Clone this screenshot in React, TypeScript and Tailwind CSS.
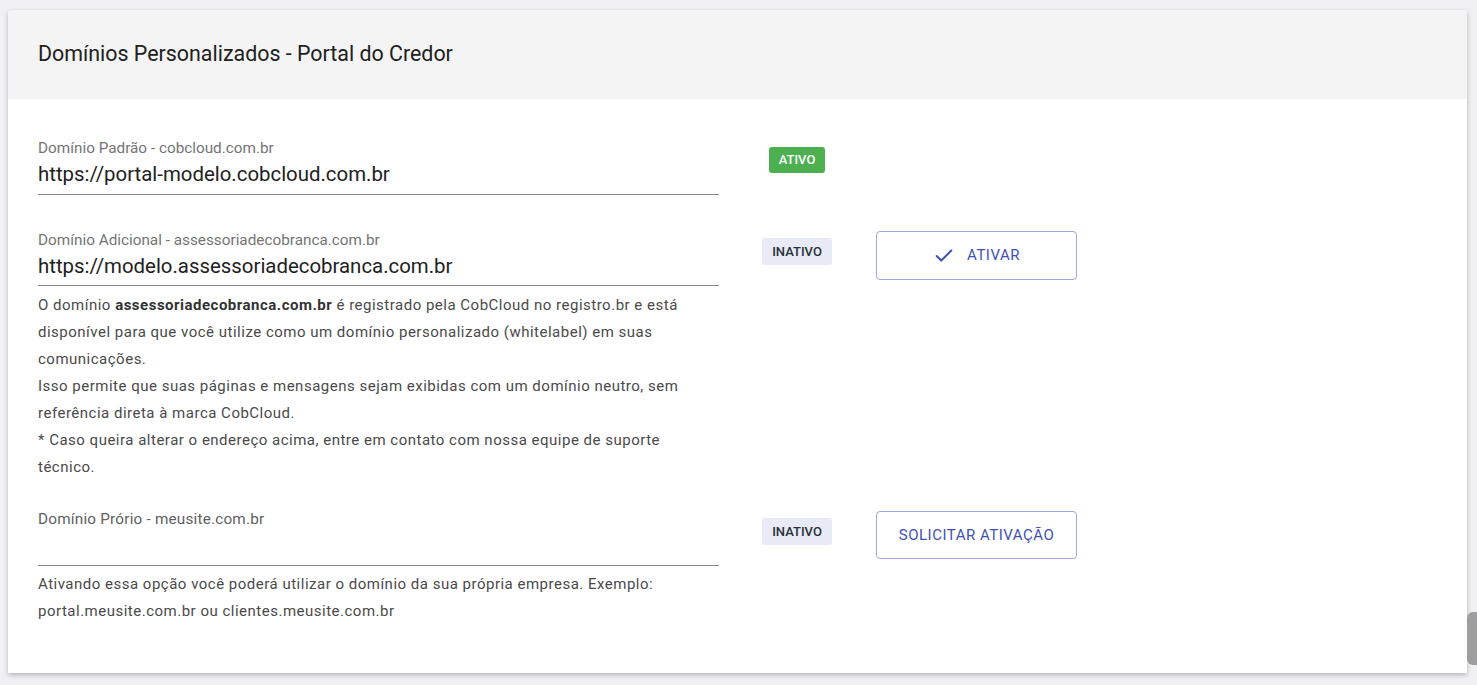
import { Check } from 'lucide-react';

function StatusBadge({ active }: { active: boolean }) {
  return active ? (
    <span className="inline-flex h-[26px] w-[56px] items-center justify-center rounded-[3px] bg-[#4caf50] text-[13px] font-medium text-white">
      ATIVO
    </span>
  ) : (
    <span className="inline-flex h-[27px] w-[70px] items-center justify-center rounded-[3px] bg-[#e8eaf6] text-[13px] font-medium text-[#263238]">
      INATIVO
    </span>
  );
}

export default function App() {
  return (
    <div className="min-h-screen bg-[#f1f1f3] pt-[10px] pl-2 pr-[10px] font-['Roboto',sans-serif]">
      <div className="w-[1459px] overflow-hidden rounded-t-[4px] bg-white shadow-[0_2px_5px_rgba(0,0,0,0.25)]">
        {/* Header */}
        <div className="flex h-[89px] items-center bg-[#f4f4f4] px-[30px] pb-[1px]">
          <h1 className="text-[21.4px] text-[#212121]">Domínios Personalizados - Portal do Credor</h1>
        </div>

        {/* Content */}
        <div className="px-[30px] pt-[40px] pb-[48px]">
          {/* Domínio padrão */}
          <div className="flex">
            <div className="w-[681px]">
              <div className="text-[15.3px] leading-[18px] text-[#757575]">Domínio Padrão - cobcloud.com.br</div>
              <div className="border-b border-[#8a8a8a] pt-[4px] pb-[7px] text-[20.4px] leading-[26px] text-[#212121]">
                https://portal-modelo.cobcloud.com.br
              </div>
            </div>
            <div className="w-[157px] pt-[8px] pl-[50px]">
              <StatusBadge active />
            </div>
          </div>

          {/* Domínio adicional */}
          <div className="mt-[36px] flex">
            <div className="w-[681px]">
              <div className="text-[15.3px] leading-[18px] text-[#757575]">
                Domínio Adicional - assessoriadecobranca.com.br
              </div>
              <div className="border-b border-[#8a8a8a] pt-[4px] pb-[6px] text-[20.4px] leading-[26px] text-[#212121]">
                https://modelo.assessoriadecobranca.com.br
              </div>
              <p className="max-w-[665px] pt-[6px] text-[15px] leading-[27px] tracking-[0.5px] text-[#4a4a4a]">
                O domínio <b className="font-bold text-[#333]">assessoriadecobranca.com.br</b> é registrado pela
                CobCloud no registro.br e está disponível para que você utilize como um domínio personalizado
                (whitelabel) em suas comunicações.
                <br />
                Isso permite que suas páginas e mensagens sejam exibidas com um domínio neutro, sem referência direta à
                marca CobCloud.
                <br />* Caso queira alterar o endereço acima, entre em contato com nossa equipe de suporte técnico.
              </p>
            </div>
            <div className="w-[157px] pt-[7px] pl-[43px]">
              <StatusBadge active={false} />
            </div>
            <div>
              <button className="flex h-[49px] w-[201px] items-center justify-center gap-[12px] rounded-[4px] border border-[#9fa8da] bg-white text-[15px] tracking-[0.5px] text-[#3f51b5]">
                <Check className="h-[22px] w-[22px]" strokeWidth={2.2} />
                ATIVAR
              </button>
            </div>
          </div>

          {/* Domínio próprio */}
          <div className="mt-[29px] flex">
            <div className="w-[681px]">
              <div className="text-[15.3px] leading-[18px] tracking-[0.2px] text-[#5f5f5f]">Domínio Prório - meusite.com.br</div>
              <div className="h-[38px] border-b border-[#8a8a8a]" />
              <p className="max-w-[665px] pt-[5px] text-[15px] leading-[27px] tracking-[0.5px] text-[#4a4a4a]">
                Ativando essa opção você poderá utilizar o domínio da sua própria empresa. Exemplo:
                <br />
                portal.meusite.com.br ou clientes.meusite.com.br
              </p>
            </div>
            <div className="w-[157px] pt-[8px] pl-[43px]">
              <StatusBadge active={false} />
            </div>
            <div className="pt-[1px]">
              <button className="flex h-[48px] w-[201px] items-center justify-center rounded-[4px] border border-[#9fa8da] bg-white text-[15px] tracking-[0.5px] text-[#3f51b5]">
                SOLICITAR ATIVAÇÃO
              </button>
            </div>
          </div>
        </div>
      </div>
      {/* scrollbar thumb */}
      <div className="fixed right-0 top-[612px] h-[53px] w-[10px] rounded-l-[6px] bg-[#9e9e9e]" />
    </div>
  );
}
